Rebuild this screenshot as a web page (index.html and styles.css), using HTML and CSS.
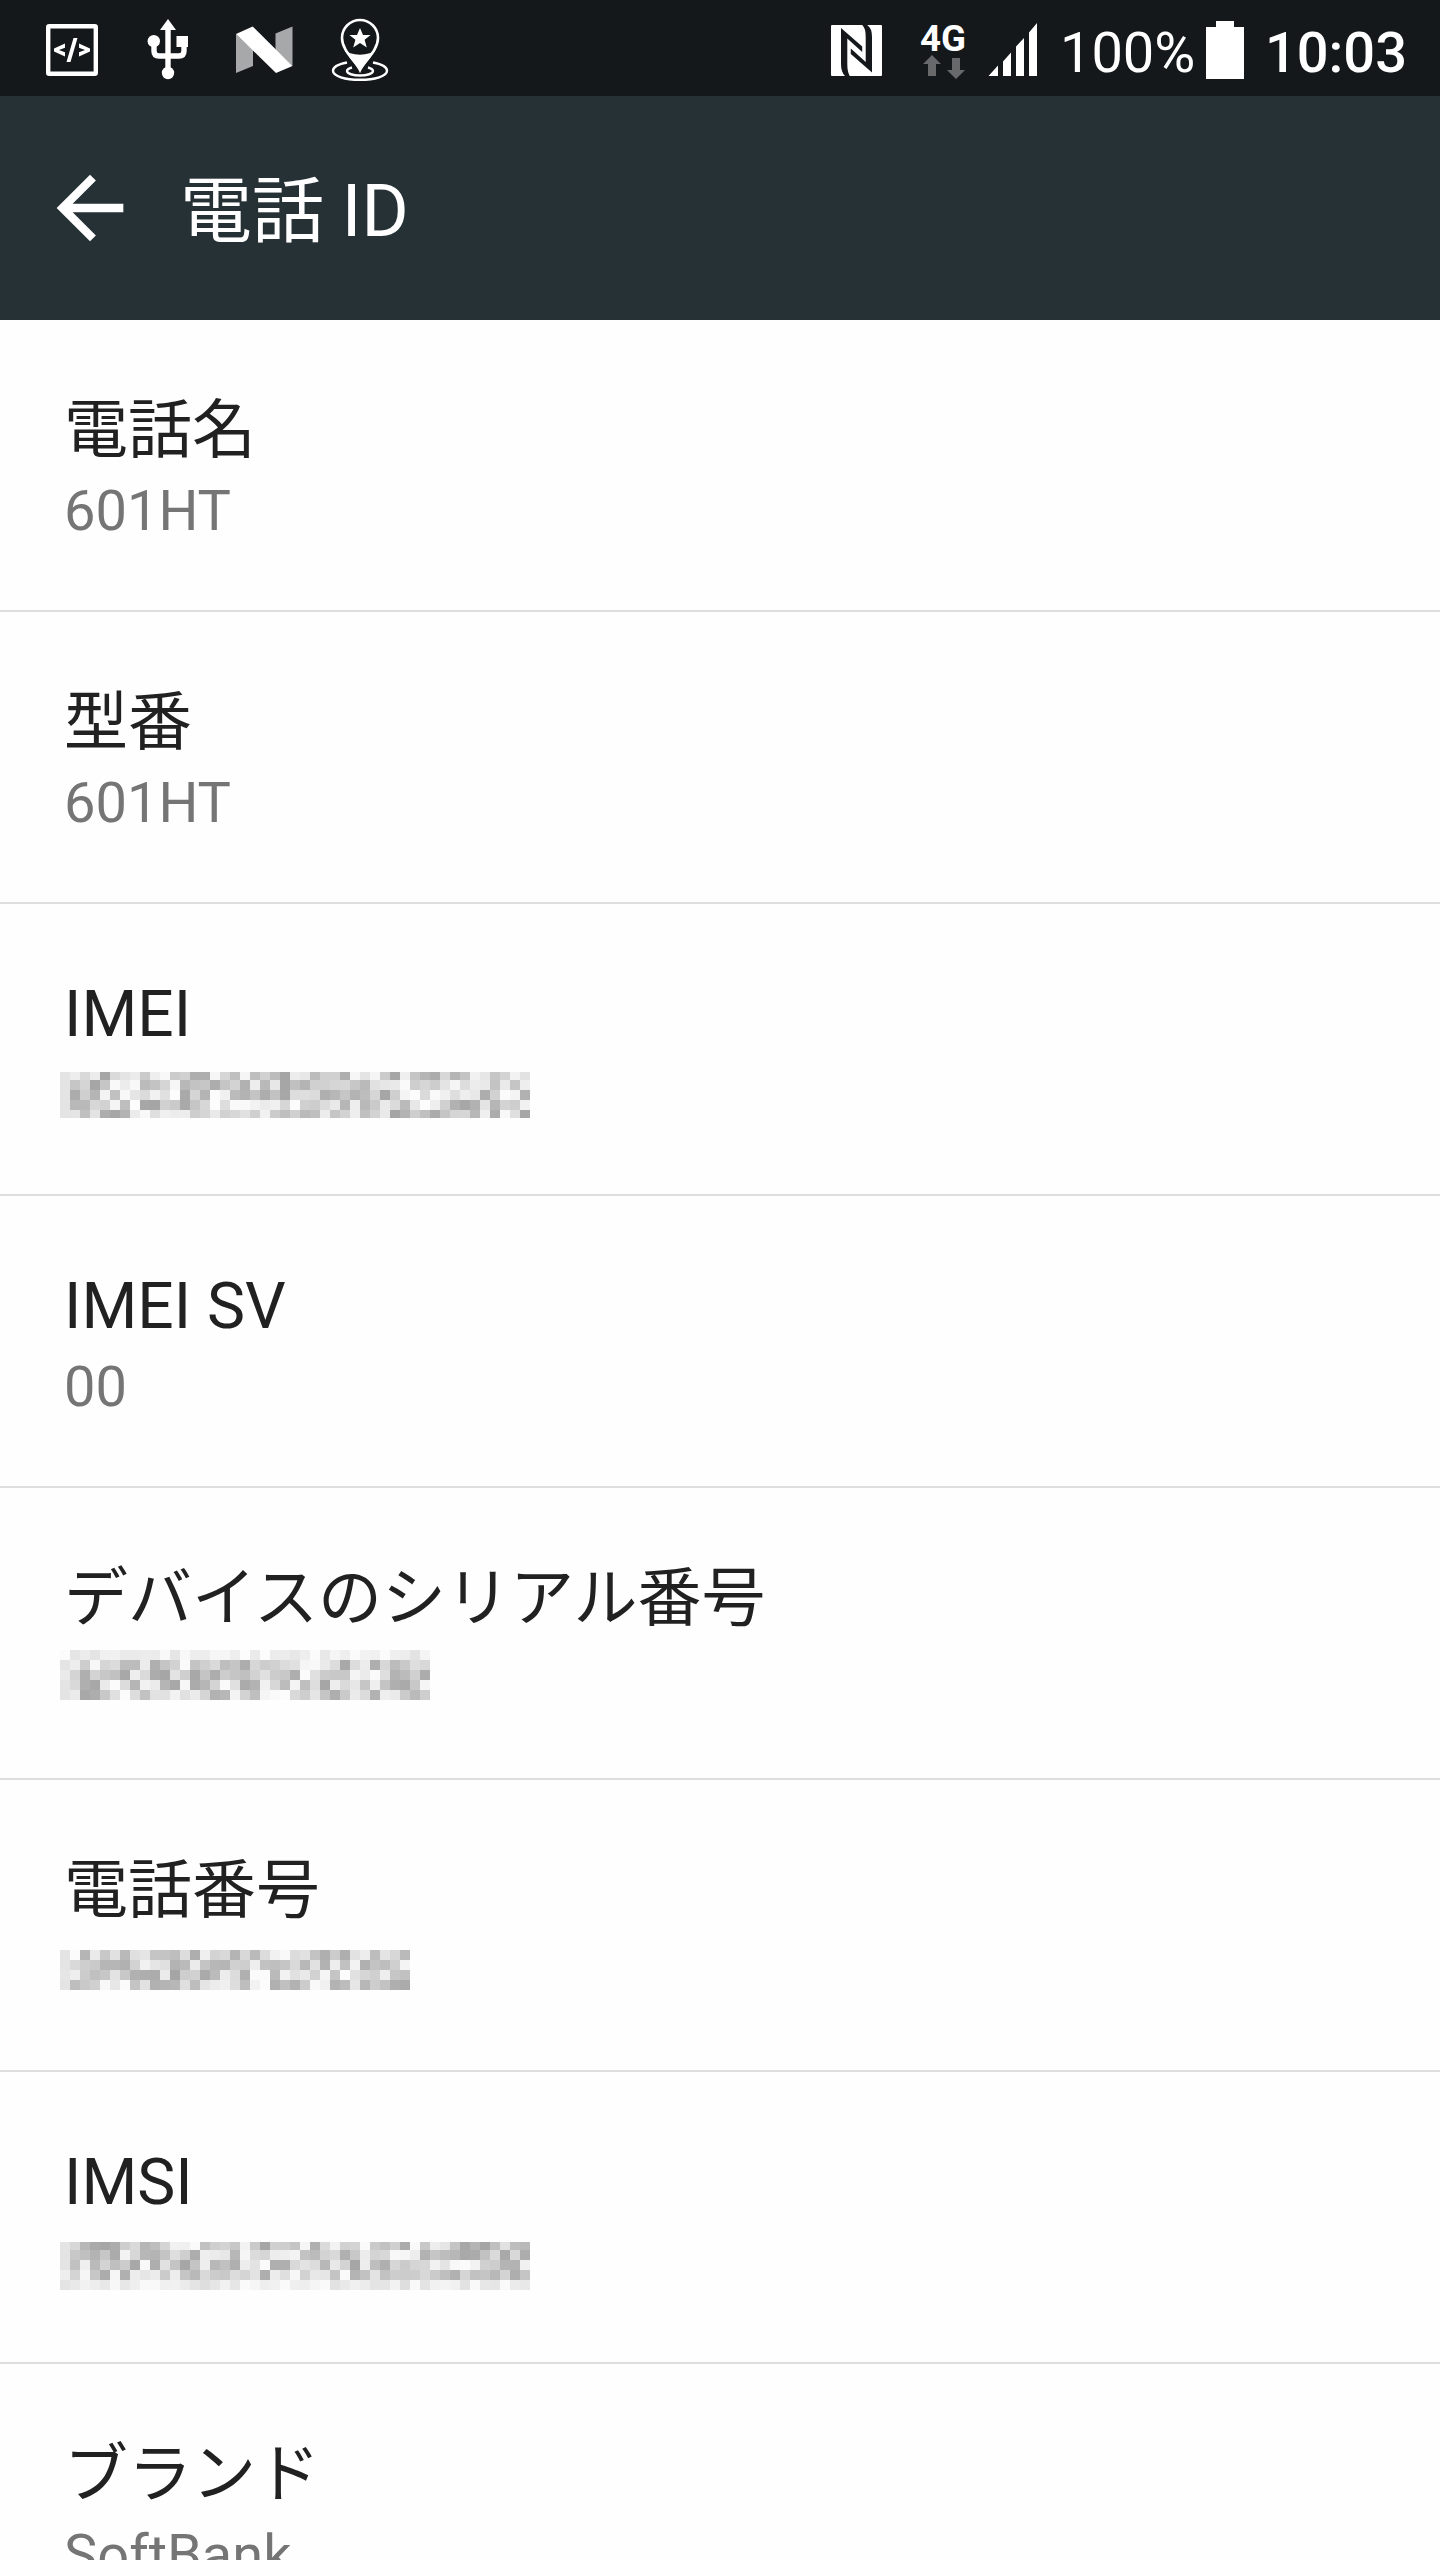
FILE: index.html
```html
<!DOCTYPE html>
<html lang="ja">
<head>
    <meta charset="UTF-8">
    <meta name="viewport" content="width=device-width, initial-scale=1.0">
    <title>電話 ID</title>
    <link rel="stylesheet" href="styles.css">
</head>
<body>
    <div class="status-bar">
        <div class="notifications">
            <svg width="52" height="96" viewBox="46 0 52 96">
                <rect x="48.2" y="26.2" width="47.6" height="47.6" rx="1" fill="none" stroke="#fff" stroke-width="4.4"/>
                <path d="M65 43.5v4.2l-6 2.3 6 2.3v4.2l-11-4.9v-3.2zM79 43.5v4.2l6 2.3-6 2.3v4.2l11-4.9v-3.2zM73.5 38h4l-7 24h-4z" fill="#fff"/>
            </svg>
            <svg width="42" height="96" viewBox="147 0 42 96">
                <path d="M154 42v9q0 5 5 5h20q5 0 5-5v-8" fill="none" stroke="#fff" stroke-width="5.4"/>
                <path d="M165.3 72V30h-5.3l8-11 8 11h-5.3v42zM176.5 36H188v11h-11.5z" fill="#fff"/>
                <circle cx="153.8" cy="41.2" r="6.2" fill="#fff"/>
                <circle cx="168" cy="73" r="6.2" fill="#fff"/>
            </svg>
            <svg width="57" height="96" viewBox="236 0 57 96">
                <path d="M236 34l17 16v16l-17 7zM275.500 33.500L292.500 26.500V66l-17-16z" fill="#a7a8aa"/>
                <path d="M236 34l16.700-7.500L292.500 66 276 73z" fill="#fff"/>
            </svg>
            <svg width="58" height="96" viewBox="331 0 58 96">
                <g fill="none" stroke="#fff">
                    <path d="M347 62.500c-8 1.500-14 4.500-14 8.300 0 5.300 12 9 27 9s27-3.700 27-9c0-3.800-6-6.800-14-8.300" stroke-width="2.400"/>
                    <path d="M352 67.500c-3 .8-5 2-5 3.500 0 2.700 6 4.500 13 4.500s13-1.800 13-4.500c0-1.500-2-2.700-5-3.500" stroke-width="2.400"/>
                    <path d="M360 70c-4-9-18-19-18-32a18 18 0 0 1 36 0c0 13-14 23-18 32z" stroke-width="2.600"/>
                </g>
                <path d="M344 49c5 7.500 27 7.500 32 0-4 8-12 15-16 22.500-4-7.500-12-14.500-16-22.500z" fill="#fff"/>
                <path d="M360 28l3 7h7.600l-6 4.800 2.200 7.700-6.800-4.500-6.800 4.500 2.200-7.700-6-4.800h7.600z" fill="#fff"/>
            </svg>
        </div>
        <div class="system-icons">
            <svg class="nfc" width="51" height="96" viewBox="831 0 51 96">
                <rect x="831" y="25" width="51" height="51" rx="1" fill="#fff"/>
                <path d="M841 28l21.200 18.500V52L847.300 38.500V64q0 8 2.500 12H845q-4-4-4-12zM872 72.500L850.800 54v-5.500L865.700 62V37q0-9-3.500-12h5q4.800 3 4.800 12z" fill="#14181b"/>
            </svg>
            <svg class="network" width="46" height="96" viewBox="920 0 46 96">
                <text class="network-label" x="920" y="50.500" textLength="46" lengthAdjust="spacingAndGlyphs">4G</text>
                <path d="M932 55l9 9h-5v12h-8V64h-5zM956 79l-9-9h5V58h8v12h5z" fill="#67696b"/>
            </svg>
            <svg class="signal" width="49" height="96" viewBox="988 0 49 96">
                <path d="M988.500 76l9.500-10.500V76zM1003 76V61.500l8-9V76zM1016 76V46.500l8-8.500v38zM1029 76V32.500l8-9.500v53z" fill="#fff"/>
            </svg>
            <span class="battery-level">100%</span>
            <svg class="battery" width="38" height="96" viewBox="1207 0 38 96">
                <path d="M1207 27h10v-6h18v6h10v52h-38z" fill="#fff"/>
            </svg>
            <span class="clock">10:03</span>
        </div>
    </div>

    <header class="toolbar">
        <svg class="back" width="100" height="100" viewBox="0 0 24 24">
            <path d="M20 11H7.830l5.590-5.590L12 4l-8 8 8 8 1.410-1.410L7.830 13H20v-2z" fill="#fff"/>
        </svg>
        <h1>電話 ID</h1>
    </header>

    <ul class="list">
        <li>
            <div class="name">電話名</div>
            <div class="value">601HT</div>
        </li>
        <li>
            <div class="name">型番</div>
            <div class="value">601HT</div>
        </li>
        <li>
            <div class="name">IMEI</div>
            <div class="mosaic imei" data-cols="47" data-seed="11"></div>
        </li>
        <li>
            <div class="name">IMEI SV</div>
            <div class="value">00</div>
        </li>
        <li>
            <div class="name">デバイスのシリアル番号</div>
            <div class="mosaic serial" data-cols="37" data-seed="23"></div>
        </li>
        <li>
            <div class="name">電話番号</div>
            <div class="mosaic phone" data-cols="35" data-seed="37"></div>
        </li>
        <li>
            <div class="name">IMSI</div>
            <div class="mosaic imsi" data-cols="47" data-seed="53"></div>
        </li>
        <li>
            <div class="name">ブランド</div>
            <div class="value">SoftBank</div>
        </li>
    </ul>

    <script src="script.js"></script>
</body>
</html>
```

FILE: styles.css
```css
body {
    margin: 0;
    height: 2560px;
    overflow: hidden;
    background-color: #fefefe;
    color: #212121;
    font-family: Roboto, "Noto Sans CJK JP", sans-serif;
}
.status-bar {
    display: flex;
    justify-content: space-between;
    height: 96px;
    padding: 0 33px 0 46px;
    background-color: #14181a;
    color: white;
}
.status-bar svg {
    display: block;
    flex: none;
}
.notifications {
    display: flex;
    gap: 49px;
}
.notifications svg:nth-child(3) {
    margin-left: -2px;
}
.notifications svg:nth-child(4) {
    margin-left: -11px;
}
.system-icons {
    display: flex;
    font-size: 56px;
    line-height: 106px;
}
.network {
    margin-left: 38px;
}
.network-label {
    font-size: 37px;
    font-weight: bold;
    fill: white;
}
.signal {
    margin-left: 22px;
}
.battery-level {
    width: 146px;
    margin-left: 23px;
}
.battery {
    margin-right: 21px;
}
.clock {
    font-weight: 500;
}
.toolbar {
    display: flex;
    align-items: center;
    height: 224px;
    padding-left: 40px;
    background-color: #263136;
    color: white;
}
.toolbar h1 {
    margin: 0 0 0 40px;
    font-size: 72px;
    font-weight: normal;
    line-height: 84px;
    padding-top: 7px;
}
.list {
    margin: 0;
    padding: 0;
    list-style: none;
}
.list li {
    box-sizing: border-box;
    height: 292px;
    padding: 73px 64px 0;
    border-bottom: 2px solid #dedede;
}
.name {
    font-size: 64px;
    line-height: 76px;
}
.value {
    margin-top: 9px;
    color: #757575;
    font-size: 56px;
    line-height: 66px;
}
/* hidden values */
.mosaic {
    display: grid;
    grid-auto-columns: 10px;
    grid-auto-flow: column;
    margin-left: -4px;
}
.imei {
    grid-template-rows: 8px 10px 10px 10px 8px;
    margin-top: 19px;
}
.serial {
    grid-template-rows: repeat(5, 10px);
    margin-top: 13px;
}
.phone {
    grid-template-rows: repeat(4, 10px);
    margin-top: 21px;
}
.imsi {
    grid-template-rows: 8px 10px 10px 10px 10px;
    margin-top: 21px;
}
```

FILE: script.js
```javascript
// Fills the hidden values with grey blocks, unrelated to any number
document.querySelectorAll('.mosaic').forEach(function(box) {
    const cols = Number(box.dataset.cols);
    const rows = getComputedStyle(box).gridTemplateRows.split(' ').length;
    let seed = Number(box.dataset.seed);

    function random() {
        seed = (seed * 16807) % 2147483647;
        return seed / 2147483647;
    }

    for (let i = 0; i < 10; i++) {
        random();
    }

    for (let col = 0; col < cols; col++) {
        for (let row = 0; row < rows; row++) {
            let shade = 165 + Math.floor(random() * 88);
            if (box.classList.contains('serial') && row === 0) {
                shade = 225 + Math.floor(random() * 28);
            }
            if (box.classList.contains('imsi') && row === 4) {
                shade = 222 + Math.floor(random() * 30);
            }
            if (col === 0) {
                shade = Math.max(shade, 228);
            }
            const cell = document.createElement('div');
            cell.style.backgroundColor = `rgb(${shade}, ${shade}, ${shade})`;
            box.appendChild(cell);
        }
    }
});
```
